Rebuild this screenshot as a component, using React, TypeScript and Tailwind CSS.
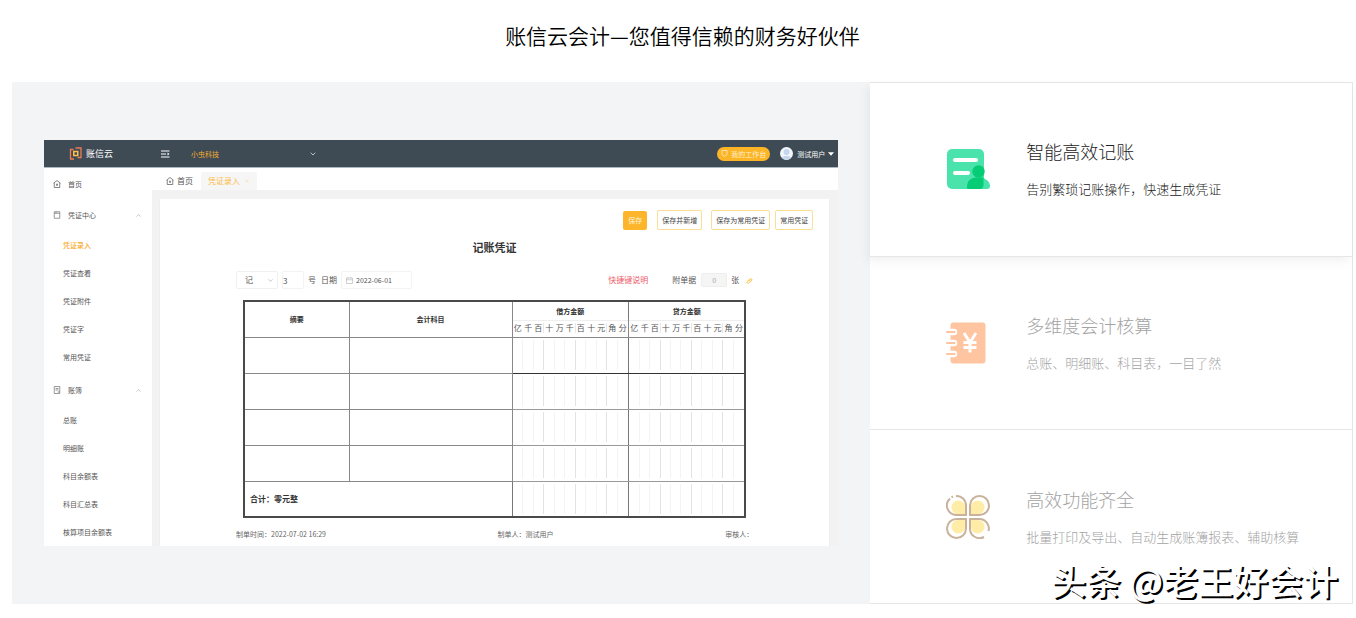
import { useState } from 'react';
import type { ReactNode } from 'react';
import { ChevronDown, ChevronUp, X } from 'lucide-react';
import clsx from 'clsx';

const UNITS = ['亿', '千', '百', '十', '万', '千', '百', '十', '元', '角', '分'];

const MENU = [
    { title: '凭证中心', items: ['凭证录入', '凭证查看', '凭证附件', '凭证字', '常用凭证'] },
    { title: '账簿', items: ['总账', '明细账', '科目余额表', '科目汇总表', '核算项目余额表'] },
];

function LogoIcon() {
    return (
        <svg viewBox="0 0 26 26" className="w-[13px] h-[13px]" fill="none" strokeWidth="2.6">
            <path d="M9 5H3v19h7" stroke="#ee7a58" />
            <path d="M13 2h11v19h-7" stroke="#ee7a58" />
            <path d="M9.500 9h8v8h-8z" stroke="#fbc04c" strokeWidth="3" />
        </svg>
    );
}

function HomeIcon() {
    return (
        <svg viewBox="0 0 16 16" className="w-2 h-2" fill="none" stroke="#666" strokeWidth="1.6">
            <path d="M1 6.500L8 1l7 5.500M2.500 6v9h11V6" />
            <path d="M8 7v5M6 9.500h4" />
        </svg>
    );
}

function BookIcon() {
    return (
        <svg viewBox="0 0 16 16" className="w-2 h-2" fill="none" stroke="#777" strokeWidth="1.5">
            <path d="M2.500 1.500h11v13h-11zM2.500 4.500h11M6 1.500v3" />
        </svg>
    );
}

function LedgerIcon() {
    return (
        <svg viewBox="0 0 16 16" className="w-2 h-2" fill="none" stroke="#777" strokeWidth="1.5">
            <path d="M2.500 1h11v14h-11zM5 5h6M5 8h6M9 12h5" />
        </svg>
    );
}

function VoucherIcon() {
    return (
        <svg viewBox="0 0 44 44" className="w-11 h-11">
            <rect x="1" y="2" width="37" height="40" rx="5" fill="#4be3ac" />
            <path d="M22 42c0-7 4-11.500 11-11.500S44 35 44 39c0 2-1 3-3 3z" fill="#4be3ac" />
            <path d="M22.500 42c-1.500 0-1.500-1-1.500-2 0-6 4-9.500 9-9.500h7.500V38c0 2.500-1.500 4-4 4z" fill="#06cc75" />
            <circle cx="32.500" cy="24.500" r="6.200" fill="#06cc75" />
            <rect x="7" y="11" width="25" height="4" rx="2" fill="#fff" />
            <rect x="7" y="24" width="17" height="4" rx="2" fill="#fff" />
        </svg>
    );
}

function AccountBookIcon() {
    return (
        <svg viewBox="0 0 44 44" className="w-11 h-11" fill="none">
            <rect x="4.500" y="1.500" width="35" height="41" rx="3" fill="#ffc4a0" />
            {[11, 22, 33].map((y) => (
                <g key={y}>
                    <path d={`M0 ${y}h8`} stroke="#fff" strokeWidth="6.500" strokeLinecap="round" />
                    <path d={`M1 ${y}h7.500`} stroke="#ffc4a0" strokeWidth="2.200" strokeLinecap="round" />
                </g>
            ))}
            <path d="M18 12l6 9.500 6-9.500M24 21.500V31.500M17.500 21.500h13M17.500 26.500h13" stroke="#fff" strokeWidth="3" />
        </svg>
    );
}

function CloverIcon() {
    return (
        <svg viewBox="0 0 44 44" className="w-11 h-11" fill="none" stroke="#c9b29b" strokeWidth="2">
            <g fill="#ffeca6" stroke="none">
                <path d="M19 19h-6.500a6.800 6.800 0 1 1 6.500-6.500z" />
                <path d="M25 19v-6.500a6.800 6.800 0 1 1 6.500 6.500z" />
                <path d="M19 25v6.500a6.800 6.800 0 1 1-6.500-6.500z" />
                <path d="M25 25h6.500a6.800 6.800 0 1 1-6.500 6.500z" />
            </g>
            <path d="M4 3.500A9.500 9.500 0 0 0 10.500 20H20V10.500A9.500 9.500 0 0 0 10 1" />
            <path d="M5.500 2.300l1.500-.8" />
            <path d="M24 20V10.500A9.500 9.500 0 1 1 33.500 20z" />
            <path d="M20 24v9.500A9.500 9.500 0 1 1 10.500 24z" />
            <path d="M42.500 36A9.500 9.500 0 0 0 33.500 24H24v9.500A9.500 9.500 0 0 0 38 42" />
        </svg>
    );
}

const FEATURES = [
    { title: '智能高效记账', desc: '告别繁琐记账操作，快速生成凭证', icon: <VoucherIcon /> },
    { title: '多维度会计核算', desc: '总账、明细账、科目表，一目了然', icon: <AccountBookIcon /> },
    { title: '高效功能齐全', desc: '批量打印及导出、自动生成账簿报表、辅助核算', icon: <CloverIcon /> },
];

function AppHeader() {
    return (
        <header className="h-7 flex items-center bg-[#3f4b54] border-b border-[#a9bac5] text-white">
            <div className="w-[108px] flex items-center gap-1 pl-[25px] text-[9px]">
                <LogoIcon />
                <span>账信云</span>
            </div>
            <svg viewBox="0 0 18 16" className="ml-[9px] w-[9px] h-2" stroke="#fff" strokeWidth="2" fill="none">
                <path d="M0 2h17M0 8h10M0 14h17" />
                <path d="M13 5l4 3-4 3z" fill="#fff" stroke="none" />
            </svg>
            <button type="button" className="ml-[21px] w-[126px] flex items-center justify-between text-[#f5ad2e]">
                <span>小虫科技</span>
                <ChevronDown className="w-2 h-2 text-white" />
            </button>
            <div className="ml-auto flex items-center pr-1">
                <button
                    type="button"
                    className="h-[14px] px-1 flex items-center gap-[3px] rounded-full bg-[#fdb528] text-[#fff0cc]"
                >
                    <svg viewBox="0 0 14 14" className="w-[7px] h-[7px]" fill="none" stroke="#fff0cc" strokeWidth="1.5">
                        <path d="M2 1h10v8l-5 4-5-4z" />
                    </svg>
                    我的工作台
                </button>
                <svg viewBox="0 0 26 26" className="ml-[10px] w-[13px] h-[13px]">
                    <circle cx="13" cy="13" r="13" fill="#f3f7fc" />
                    <circle cx="13" cy="10" r="6" fill="#c4d5ee" />
                    <path d="M4 22c2-6 16-6 18 0a13 13 0 0 1-18 0z" fill="#c4d5ee" />
                </svg>
                <span className="ml-1">测试用户</span>
                <svg viewBox="0 0 10 6" className="ml-[3px] w-[6px] h-1">
                    <path d="M0 0h10L5 6z" fill="#fff" />
                </svg>
            </div>
        </header>
    );
}

function Sidebar() {
    return (
        <nav className="w-[108px] shrink-0 bg-white">
            <a href="#home" className="h-8 pl-[9px] flex items-center gap-[7px]">
                <HomeIcon />
                首页
            </a>
            {MENU.map((group, index) => (
                <div key={group.title} className="mb-1 last:mb-0">
                    <div className="h-[30px] pl-[9px] pr-[10px] flex items-center gap-[7px]">
                        {index === 0 ? <BookIcon /> : <LedgerIcon />}
                        <span>{group.title}</span>
                        <ChevronUp className="ml-auto w-[7px] h-[7px] text-gray-400" />
                    </div>
                    <ul className="pt-px">
                        {group.items.map((item) => (
                            <li key={item}>
                                <a
                                    href="#voucher"
                                    className={clsx(
                                        'h-7 pl-[19px] flex items-center',
                                        item === '凭证录入' && 'text-[#fba91e] font-medium'
                                    )}
                                >
                                    {item}
                                </a>
                            </li>
                        ))}
                    </ul>
                </div>
            ))}
        </nav>
    );
}

function OutlineButton({ children }: { children: ReactNode }) {
    return (
        <button type="button" className="h-5 px-1 border border-[#fbdf94] rounded-xs bg-white text-[#444]">
            {children}
        </button>
    );
}

function AmountCell({ dark }: { dark?: boolean }) {
    return (
        <td className={clsx('border-x border-x-[#777] border-b p-0', dark ? 'border-b-[#333]' : 'border-b-[#999]')}>
            <div className="h-[30px] grid grid-cols-11">
                {UNITS.map((_, i) => (
                    <span
                        key={i}
                        className={clsx(
                            'border-r last:border-r-0',
                            i % 3 === 2 ? 'border-[#dfe5e4]' : 'border-[#f3f3f3]'
                        )}
                    />
                ))}
            </div>
        </td>
    );
}

function VoucherTable() {
    return (
        <table className="w-full table-fixed border-collapse border-2 border-[#4a4a4a] text-[#333]">
            <colgroup>
                <col className="w-[105px]" />
                <col className="w-[163px]" />
                <col />
                <col />
            </colgroup>
            <thead>
                <tr className="h-[18px]">
                    <th rowSpan={2} className="border border-[#888] font-bold">摘要</th>
                    <th rowSpan={2} className="border border-[#888] font-bold">会计科目</th>
                    <th className="border-x border-[#777] p-0 font-bold">借方金额</th>
                    <th className="border-x border-[#777] p-0 font-bold">贷方金额</th>
                </tr>
                <tr className="h-[18px]">
                    {['debit', 'credit'].map((side) => (
                        <td key={side} className="border-x border-b border-[#888] p-0">
                            <div className="h-4 grid grid-cols-11 items-center border-t border-[#eee] text-center text-[8px] text-[#555]">
                                {UNITS.map((unit, i) => (
                                    <span key={i} className={clsx(i % 3 === 2 && 'border-r border-[#e8e8e8]')}>
                                        {unit}
                                    </span>
                                ))}
                            </div>
                        </td>
                    ))}
                </tr>
            </thead>
            <tbody>
                {[0, 1, 2, 3].map((row) => (
                    <tr key={row} className="h-9">
                        <td className="border border-[#888]" />
                        <td className="border border-[#888]" />
                        <AmountCell dark={row === 0} />
                        <AmountCell dark={row === 0} />
                    </tr>
                ))}
                <tr className="h-9">
                    <td colSpan={2} className="pl-[5px] text-[8px] font-bold">合计：零元整</td>
                    <AmountCell />
                    <AmountCell />
                </tr>
            </tbody>
        </table>
    );
}

function VoucherForm() {
    return (
        <div className="flex-1 mr-[9px] bg-white shadow-xs">
            <div className="pt-[11px] pr-4 h-[31px] flex items-center justify-end gap-[5px]">
                <button type="button" className="h-[19px] px-[5px] mr-[5px] rounded-xs bg-[#fdb62c] text-[#fff3d6]">
                    保存
                </button>
                <span className="mr-1 flex">
                    <OutlineButton>保存并新增</OutlineButton>
                </span>
                <OutlineButton>保存为常用凭证</OutlineButton>
                <OutlineButton>常用凭证</OutlineButton>
            </div>
            <h2 className="pt-[9px] h-[41px] text-center text-[11px] leading-4 font-bold text-[#333]">记账凭证</h2>
            <div className="px-[76px]">
                <div className="h-[29px] pb-[11px] flex items-center">
                    <div className="relative w-[42px]">
                        <select
                            aria-label="凭证字"
                            className="w-full h-[18px] pl-2 appearance-none border border-[#f0f0f0] rounded-xs text-[8px]"
                        >
                            <option>记</option>
                        </select>
                        <ChevronDown className="absolute right-1 top-[6px] w-[7px] h-[7px] text-gray-400 pointer-events-none" />
                    </div>
                    <input
                        id="voucher-no"
                        defaultValue="3"
                        className="ml-1 w-[22px] h-[18px] border border-[#f3f3f3] rounded-xs text-[8px]"
                    />
                    <label htmlFor="voucher-no" className="ml-1 text-[8px]">号</label>
                    <label htmlFor="voucher-date" className="ml-[5px] mr-1 text-[8px]">日期</label>
                    <div className="w-[71px] h-[18px] pl-1 flex items-center gap-[3px] border border-[#f3f3f3] rounded-xs">
                        <svg viewBox="0 0 14 14" className="w-[7px] h-[7px] shrink-0" fill="none" stroke="#bbb" strokeWidth="1.4">
                            <path d="M1 2h12v11H1zM1 5.500h12M4 0v3M10 0v3" />
                        </svg>
                        <input id="voucher-date" defaultValue="2022-06-01" className="w-full min-w-0" />
                    </div>
                    <a href="#shortcut" className="ml-auto text-[8px] text-[#ee5a68]">快捷键说明</a>
                    <label htmlFor="voucher-bills" className="ml-6 mr-[5px] text-[8px]">附单据</label>
                    <input
                        id="voucher-bills"
                        defaultValue="0"
                        className="w-[26px] h-[14px] bg-[#f5f5f5] border border-[#eee] rounded-xs text-center text-gray-400"
                    />
                    <span className="ml-1 mr-[7px] text-[8px]">张</span>
                    <svg viewBox="0 0 14 14" className="w-[7px] h-[7px]" fill="none" stroke="#fcc95e" strokeWidth="2">
                        <path d="M2 9l6-5h4l-1 4-6 4H2z M5 8l4-2" />
                    </svg>
                </div>
                <div className="mx-[7px]">
                    <VoucherTable />
                </div>
                <div className="h-7 pt-1 flex items-center justify-between text-[#666]">
                    <span>制单时间：2022-07-02 16:29</span>
                    <span>制单人：测试用户</span>
                    <span>审核人：</span>
                </div>
            </div>
        </div>
    );
}

function AppPreview() {
    return (
        <div className="w-full overflow-hidden text-[7px] leading-[10px] text-[#555]">
            <AppHeader />
            <div className="flex">
                <Sidebar />
                <div className="flex-1 min-w-0 flex flex-col bg-[#f2f2f3]">
                    <div className="h-[22px] flex items-end bg-white text-[8px]">
                        <a href="#home" className="h-[18px] ml-[14px] flex items-center gap-[3px]">
                            <HomeIcon />
                            首页
                        </a>
                        <a href="#entry" className="h-[18px] ml-2 px-[7px] flex items-center gap-1 rounded-t-xs bg-[#f6f6f6] text-[#fdbb45]">
                            凭证录入
                            <X className="w-[6px] h-[6px] text-[#f8d79a]" />
                        </a>
                    </div>
                    <div className="flex-1 flex pt-[9px] pl-2">
                        <VoucherForm />
                    </div>
                </div>
            </div>
        </div>
    );
}

export default function App() {
    const [active, setActive] = useState(0);

    return (
        <main className="bg-white pl-3 pr-[3px] pb-[14px] font-['Noto_Sans_CJK_SC',sans-serif]">
            <h1 className="h-[82px] pt-[19px] text-center text-[21px] leading-8 font-[350] text-black">
                账信云会计—您值得信赖的财务好伙伴
            </h1>

            <div className="grid grid-cols-[64fr_36fr]">
                <div className="min-w-0 flex items-center bg-[#f3f4f6] px-8 py-[58px]">
                    <AppPreview />
                </div>

                <div className="relative flex flex-col border-t border-r border-[#e6e6e6]">
                    {FEATURES.map((feature, index) => (
                        <button
                            key={feature.title}
                            type="button"
                            onClick={() => setActive(index)}
                            className={clsx(
                                'flex-1 flex items-center gap-9 pl-[76px] text-left font-light border-b border-[#e6e6e6]',
                                active === index
                                    ? 'relative bg-white text-[#222] shadow-[-3px_4px_10px_rgba(0,0,0,0.06)]'
                                    : 'text-[#a3a3a3]'
                            )}
                        >
                            {feature.icon}
                            <span className="flex flex-col gap-4">
                                <span className="text-lg leading-6">{feature.title}</span>
                                <span className="text-[13px] leading-5">{feature.desc}</span>
                            </span>
                        </button>
                    ))}

                    <div className="absolute right-[14px] bottom-1 text-[35px] leading-10 font-medium text-white whitespace-nowrap text-shadow-[2px_2px_0_#000]">
                        头条 @老王好会计
                    </div>
                </div>
            </div>
        </main>
    );
}
